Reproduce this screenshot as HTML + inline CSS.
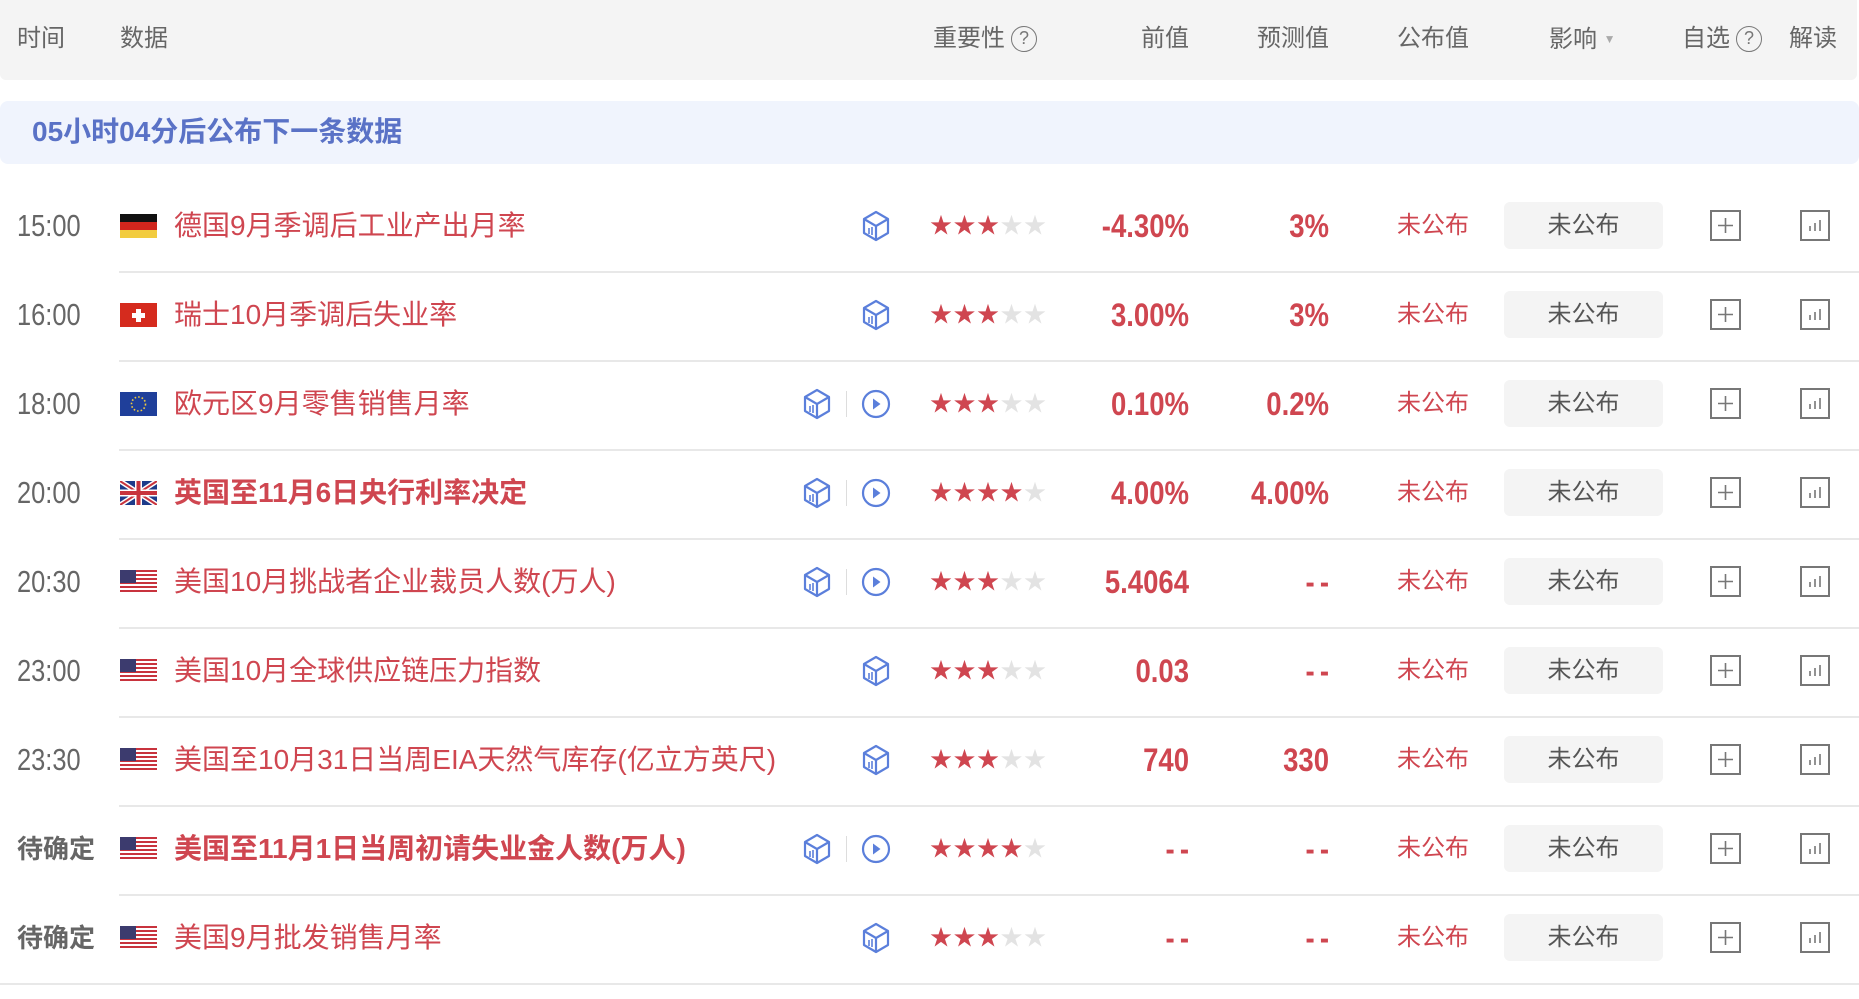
<!DOCTYPE html>
<html><head><meta charset="utf-8">
<style>
*{margin:0;padding:0;box-sizing:border-box}
body{width:1859px;height:999px;background:#fff;position:relative;overflow:hidden;font-family:"Liberation Sans","Noto Sans CJK SC",sans-serif}
.a{position:absolute;white-space:nowrap}
.hd{left:0;top:0;width:1857px;height:80px;background:#f4f4f4;border-radius:0 0 6px 6px}
.ht{font-size:24px;color:#666;top:22px;line-height:34px}
.q{display:inline-block;width:26px;height:26px;border:1.5px solid #777;border-radius:50%;font-size:18px;line-height:23px;text-align:center;color:#777;vertical-align:2px;margin-left:6px}
.bn{left:0;top:101px;width:1859px;height:63px;background:#f0f4fd;border-radius:8px}
.bt{left:32px;top:113px;font-size:28px;font-weight:bold;color:#5a72c6;line-height:38px}
.sep{height:2px;background:#e8e8e8}
.tm{left:17px;font-size:31px;color:#666;line-height:40px;transform:scaleX(0.82);transform-origin:left}
.nm{left:174px;font-size:28px;color:#cf4650;line-height:40px}
.num{font-size:32px;color:#cf4650;line-height:40px;text-align:right;width:200px;font-weight:bold;transform:scaleX(0.86);transform-origin:right}
.un{left:1397px;font-size:24px;color:#cf4650;line-height:40px}
.btn{left:1504px;width:159px;height:47px;background:#f4f4f4;border-radius:6px;text-align:center;font-size:24px;line-height:47px;color:#555}
.st{left:930px;font-size:22px;letter-spacing:1.5px;line-height:40px}
.st b{color:#cf4650;font-weight:normal}.st i{color:#e3e3e3;font-style:normal}
</style></head><body>
<div class="a hd"></div>
<div class="a ht" style="left:17px">时间</div>
<div class="a ht" style="left:120px">数据</div>
<div class="a ht" style="left:933px">重要性<span class="q">?</span></div>
<div class="a ht" style="left:1141px">前值</div>
<div class="a ht" style="left:1257px">预测值</div>
<div class="a ht" style="left:1397px">公布值</div>
<div class="a ht" style="left:1549px">影响 <span style="font-size:12px;color:#aaa;vertical-align:4px">▼</span></div>
<div class="a ht" style="left:1682px">自选<span class="q">?</span></div>
<div class="a ht" style="left:1789px">解读</div>
<div class="a bn"></div>
<div class="a bt">05小时04分后公布下一条数据</div>

<svg width="0" height="0" style="position:absolute">
<defs>
<g id="cube" fill="none" stroke="#5b7fdb" stroke-width="2.2" stroke-linejoin="round"><path d="M14 2 L26 9 L26 23 L14 30 L2 23 L2 9 Z"/><path d="M2 9 L14 16 L26 9 M14 16 L14 30"/><path d="M7 18v6M10 17v8" stroke-width="1.6"/></g>
<g id="play" fill="none" stroke="#5b7fdb" stroke-width="2.2"><circle cx="15" cy="15" r="13"/><path d="M12 9.5 L19.5 15 L12 20.5Z" fill="#5b7fdb" stroke="none"/></g>
<g id="plus"><rect x="1" y="1" width="29" height="29" fill="none" stroke="#777" stroke-width="2"/><path d="M15.5 8v15M8 15.5h15" stroke="#777" stroke-width="1.6"/></g>
<g id="chart"><rect x="1" y="1" width="28" height="29" fill="none" stroke="#777" stroke-width="2"/><path d="M10 21v-5M15 21v-8M20 21v-11" stroke="#777" stroke-width="1.6"/></g>
<g id="us"><rect width="37" height="24" fill="#fff"/><g fill="#c8333d"><rect y="0" width="37" height="2"/><rect y="4" width="37" height="2"/><rect y="8" width="37" height="2"/><rect y="12" width="37" height="2"/><rect y="16" width="37" height="2"/><rect y="20" width="37" height="2"/></g><rect width="16" height="13" fill="#3c3b6e"/></g>
<g id="de"><rect width="37" height="8" fill="#111"/><rect y="8" width="37" height="8" fill="#d0261d"/><rect y="16" width="37" height="8" fill="#f2cc3f"/></g>
<g id="ch"><rect width="37" height="24" fill="#d52b1e"/><path d="M16 6h5v4h4v5h-4v4h-5v-4h-4v-5h4z" fill="#fff"/></g>
<g id="eu"><rect width="37" height="24" fill="#1f3f9a"/><circle cx="18.5" cy="12" r="7" fill="none" stroke="#f2cc3f" stroke-width="1.6" stroke-dasharray="1.6 2"/></g>
<g id="uk"><rect width="37" height="24" fill="#1e3b8a"/><path d="M0 0L37 24M37 0L0 24" stroke="#fff" stroke-width="5"/><path d="M0 0L37 24M37 0L0 24" stroke="#c8333d" stroke-width="2"/><path d="M18.5 0v24M0 12h37" stroke="#fff" stroke-width="7"/><path d="M18.5 0v24M0 12h37" stroke="#c8333d" stroke-width="4"/></g>
</defs></svg>

<div id="rows"></div>
<script>
const R=[
["15:00","de","德国9月季调后工业产出月率",0,0,3,"-4.30%","3%"],
["16:00","ch","瑞士10月季调后失业率",0,0,3,"3.00%","3%"],
["18:00","eu","欧元区9月零售销售月率",0,1,3,"0.10%","0.2%"],
["20:00","uk","英国至11月6日央行利率决定",1,1,4,"4.00%","4.00%"],
["20:30","us","美国10月挑战者企业裁员人数(万人)",0,1,3,"5.4064","--"],
["23:00","us","美国10月全球供应链压力指数",0,0,3,"0.03","--"],
["23:30","us","美国至10月31日当周EIA天然气库存(亿立方英尺)",0,0,3,"740","330"],
["待确定","us","美国至11月1日当周初请失业金人数(万人)",1,1,4,"--","--"],
["待确定","us","美国9月批发销售月率",0,0,3,"--","--"]];
let h="";
R.forEach((r,i)=>{
 const c=225.5+89*i, t=c-20;
 h+=`<div class="a tm" style="top:${t}px;${r[0].length==3?'font-weight:bold;font-size:26px;transform:none':''}">${r[0]}</div>`;
 h+=`<svg class="a" style="left:120px;top:${c-12}px" width="37" height="24"><use href="#${r[1]}"/></svg>`;
 h+=`<div class="a nm" style="top:${t}px;${r[3]?'font-weight:bold':''}">${r[2]}</div>`;
 if(r[4]){
  h+=`<svg class="a" style="left:803px;top:${c-16}px" width="28" height="32"><use href="#cube"/></svg>`;
  h+=`<div class="a" style="left:846px;top:${c-13}px;width:1px;height:26px;background:#ddd"></div>`;
  h+=`<svg class="a" style="left:861px;top:${c-15}px" width="30" height="30"><use href="#play"/></svg>`;
 } else h+=`<svg class="a" style="left:862px;top:${c-16}px" width="28" height="32"><use href="#cube"/></svg>`;
 h+=`<div class="a st" style="top:${t}px"><b>${"★".repeat(r[5])}</b><i>${"★".repeat(5-r[5])}</i></div>`;
 const d=v=>v=="--"?'<span style="letter-spacing:6px;margin-right:-6px">--</span>':v;
 h+=`<div class="a num" style="left:989px;top:${t}px">${d(r[6])}</div>`;
 h+=`<div class="a num" style="left:1129px;top:${t}px">${d(r[7])}</div>`;
 h+=`<div class="a un" style="top:${t}px">未公布</div>`;
 h+=`<div class="a btn" style="top:${c-23.5}px">未公布</div>`;
 h+=`<svg class="a" style="left:1710px;top:${c-15.5}px" width="31" height="31"><use href="#plus"/></svg>`;
 h+=`<svg class="a" style="left:1800px;top:${c-15.5}px" width="30" height="31"><use href="#chart"/></svg>`;
 h+=`<div class="a sep" style="left:${i==8?0:119}px;width:${i==8?1859:1740}px;top:${c+45}px"></div>`;
});
document.getElementById("rows").innerHTML=h;
</script>
</body></html>
